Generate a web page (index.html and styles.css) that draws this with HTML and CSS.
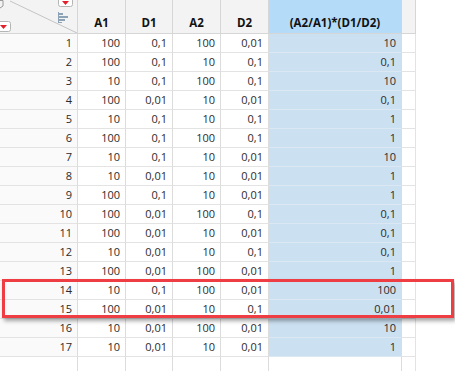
FILE: index.html
```html
<!DOCTYPE html>
<html>
<head>
<meta charset="utf-8">
<link rel="stylesheet" href="styles.css">
</head>
<body>
<div class="sheet">
  <div class="row hdr">
    <div class="corner">
      <svg class="corner-art" width="78" height="34" viewBox="0 0 78 34">
        <path d="M-2 0.5 L3 0.5 L3 6 L0 8" fill="none" stroke="#9a9a9a" stroke-width="1"/>
        <line x1="10" y1="1" x2="77" y2="33" stroke="#c4c4c4" stroke-width="1"/>
        <rect x="58.5" y="-3.5" width="14" height="10" rx="2" fill="#fff" stroke="#b5b5b5"/>
        <path d="M62 1 L69 1 L65.5 5 Z" fill="#e0202a"/>
        <rect x="-3.5" y="21.5" width="14" height="10" rx="2" fill="#fff" stroke="#b5b5b5"/>
        <path d="M0 25 L7 25 L3.5 29 Z" fill="#e0202a"/>
        <g fill="#8ea3b6">
          <rect x="58" y="12" width="1" height="11"/>
          <rect x="59" y="13" width="4" height="2"/>
          <rect x="59" y="16" width="9" height="2"/>
          <rect x="59" y="19" width="6" height="2"/>
          <rect x="59" y="22" width="3" height="1"/>
        </g>
      </svg>
    </div>
    <div class="hc">A1</div>
    <div class="hc">D1</div>
    <div class="hc">A2</div>
    <div class="hc">D2</div>
    <div class="hc sel">(A2/A1)*(D1/D2)</div>
    <div class="hc pad"></div>
  </div>

  <div class="row"><div class="rn">1</div><div class="c">100</div><div class="c">0,1</div><div class="c">100</div><div class="c">0,01</div><div class="c sel">10</div><div class="c pad"></div></div>
  <div class="row"><div class="rn">2</div><div class="c">100</div><div class="c">0,1</div><div class="c">10</div><div class="c">0,1</div><div class="c sel">0,1</div><div class="c pad"></div></div>
  <div class="row"><div class="rn">3</div><div class="c">10</div><div class="c">0,1</div><div class="c">100</div><div class="c">0,1</div><div class="c sel">10</div><div class="c pad"></div></div>
  <div class="row"><div class="rn">4</div><div class="c">100</div><div class="c">0,01</div><div class="c">10</div><div class="c">0,01</div><div class="c sel">0,1</div><div class="c pad"></div></div>
  <div class="row"><div class="rn">5</div><div class="c">10</div><div class="c">0,1</div><div class="c">10</div><div class="c">0,1</div><div class="c sel">1</div><div class="c pad"></div></div>
  <div class="row"><div class="rn">6</div><div class="c">100</div><div class="c">0,1</div><div class="c">100</div><div class="c">0,1</div><div class="c sel">1</div><div class="c pad"></div></div>
  <div class="row"><div class="rn">7</div><div class="c">10</div><div class="c">0,1</div><div class="c">10</div><div class="c">0,01</div><div class="c sel">10</div><div class="c pad"></div></div>
  <div class="row"><div class="rn">8</div><div class="c">10</div><div class="c">0,01</div><div class="c">10</div><div class="c">0,01</div><div class="c sel">1</div><div class="c pad"></div></div>
  <div class="row"><div class="rn">9</div><div class="c">100</div><div class="c">0,1</div><div class="c">10</div><div class="c">0,01</div><div class="c sel">1</div><div class="c pad"></div></div>
  <div class="row"><div class="rn">10</div><div class="c">100</div><div class="c">0,01</div><div class="c">100</div><div class="c">0,1</div><div class="c sel">0,1</div><div class="c pad"></div></div>
  <div class="row"><div class="rn">11</div><div class="c">100</div><div class="c">0,01</div><div class="c">10</div><div class="c">0,01</div><div class="c sel">0,1</div><div class="c pad"></div></div>
  <div class="row"><div class="rn">12</div><div class="c">10</div><div class="c">0,01</div><div class="c">10</div><div class="c">0,1</div><div class="c sel">0,1</div><div class="c pad"></div></div>
  <div class="row"><div class="rn">13</div><div class="c">100</div><div class="c">0,01</div><div class="c">100</div><div class="c">0,01</div><div class="c sel">1</div><div class="c pad"></div></div>
  <div class="row"><div class="rn">14</div><div class="c">10</div><div class="c">0,1</div><div class="c">100</div><div class="c">0,01</div><div class="c sel">100</div><div class="c pad"></div></div>
  <div class="row"><div class="rn">15</div><div class="c">100</div><div class="c">0,01</div><div class="c">10</div><div class="c">0,1</div><div class="c sel">0,01</div><div class="c pad"></div></div>
  <div class="row"><div class="rn">16</div><div class="c">10</div><div class="c">0,01</div><div class="c">100</div><div class="c">0,01</div><div class="c sel">10</div><div class="c pad"></div></div>
  <div class="row"><div class="rn">17</div><div class="c">10</div><div class="c">0,01</div><div class="c">10</div><div class="c">0,01</div><div class="c sel">1</div><div class="c pad"></div></div>
  <div class="row empty"><div class="rn"></div><div class="c"></div><div class="c"></div><div class="c"></div><div class="c"></div><div class="c blank"></div><div class="c pad"></div></div>

  <div class="highlight"></div>
</div>
</body>
</html>
```

FILE: styles.css
```css
html, body {
  margin: 0;
  padding: 0;
  background: #ffffff;
}
body {
  width: 455px;
  height: 371px;
  overflow: hidden;
  font-family: "Open Sans", "Noto Sans", sans-serif;
  font-size: 11px;
  color: #2b2b2b;
}
.sheet {
  position: relative;
  width: 455px;
}
.row {
  display: grid;
  grid-template-columns: 78px 48px 47px 48px 48px 133px 14px;
  height: 19px;
}
.row > div {
  box-sizing: border-box;
  border-right: 1px solid #dcdcdc;
  border-bottom: 1px solid #e3e3e3;
  text-align: right;
  padding-right: 5px;
  line-height: 18px;
  white-space: nowrap;
}
.rn {
  background: #fafafa;
}
.c.sel {
  background: #cbe0f1;
  border-bottom-color: #dbe8f4;
  border-right-color: #cbe0f1;
}
.c.pad {
  border-right-color: #e3e3e3;
}
.hdr {
  height: 34px;
}
.hdr > div {
  background: #f3f3f3;
  border-bottom: 1px solid #d6d6d6;
  border-right-color: #d6d6d6;
  text-align: center;
  padding: 0;
  font-weight: 700;
  color: #111;
  font-size: 11.5px;
  line-height: 15px;
  display: flex;
  align-items: flex-end;
  justify-content: center;
  padding-bottom: 3px;
}
.hdr > .hc.sel {
  background: #b4dbf8;
  border-right-color: #b4dbf8;
}
.hdr > .corner {
  padding: 0;
  display: block;
  position: relative;
  overflow: hidden;
}
.corner-art {
  display: block;
}
.empty > div {
  border-bottom: none;
  background: #fff;
}
.empty > .c.blank {
  border-right-color: #dcdcdc;
}
.highlight {
  position: absolute;
  left: 2px;
  top: 279px;
  width: 452px;
  height: 39px;
  box-sizing: border-box;
  border: 3px solid #ef3e43;
  box-shadow: 2px 3px 4px rgba(0, 0, 0, 0.35);
}
```
